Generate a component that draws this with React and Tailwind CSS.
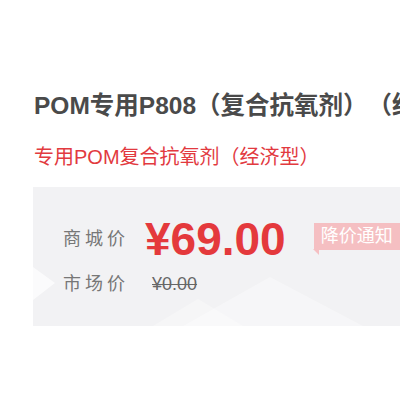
import React from "react";

const FONT = { fontFamily: '"Liberation Sans", "Noto Sans CJK SC", sans-serif' };

const PriceBox = () => {
  return (
    <div className="relative ml-[33px] h-[139px] overflow-hidden bg-[#f2f2f4]">
      {/* faint background shapes */}
      <svg
        className="absolute inset-0 h-full w-full"
        viewBox="0 0 367 139"
        preserveAspectRatio="none"
      >
        <polygon points="0,80 22,96 0,113" fill="#ffffff" opacity="0.7" />
        <polygon points="150,139 237,90 330,139" fill="#ffffff" opacity="0.35" />
        <polygon points="120,139 165,112 210,139" fill="#ffffff" opacity="0.3" />
      </svg>

      <div className="relative pl-[30px] pt-[29px]">
        <div className="flex h-[46px] items-center">
          <span className="w-[82px] text-[18px] leading-[24px] tracking-[4px] text-[#777]">
            商城价
          </span>
          <span className="text-[46px] font-bold leading-[46px] text-[#e4393c]">
            ¥69.00
          </span>
          <span className="relative ml-[28px] mt-[-5px] flex h-[27px] items-center bg-[#f5bfc2] px-[7px] text-[18px] leading-[27px] text-white">
            降价通知
            <span className="absolute bottom-[-5px] left-[-1px] h-0 w-0 border-t-[6px] border-l-[6px] border-t-[#f5bfc2] border-l-transparent" />
          </span>
        </div>
        <div className="mt-[10px] flex h-[24px] items-center">
          <span className="w-[89px] text-[18px] leading-[24px] tracking-[4px] text-[#777]">
            市场价
          </span>
          <span className="text-[18px] leading-[24px] text-[#666] line-through">
            ¥0.00
          </span>
        </div>
      </div>
    </div>
  );
};

export default function App() {
  return (
    <div
      className="h-[400px] w-[400px] overflow-hidden bg-white [text-spacing-trim:space-all]"
      style={FONT}
    >
      <div className="pt-[90px]">
        <h1 className="overflow-hidden whitespace-nowrap pl-[34px] text-[24.5px] font-bold leading-[32px] text-[#4a4a4a]">
          POM专用P808（复合抗氧剂）（经济型）
        </h1>
        <p className="mt-[22px] whitespace-nowrap pl-[34px] text-[20px] leading-[26px] text-[#e23a3f]">
          专用POM复合抗氧剂（经济型）
        </p>
        <div className="mt-[17px]">
          <PriceBox />
        </div>
      </div>
    </div>
  );
}
